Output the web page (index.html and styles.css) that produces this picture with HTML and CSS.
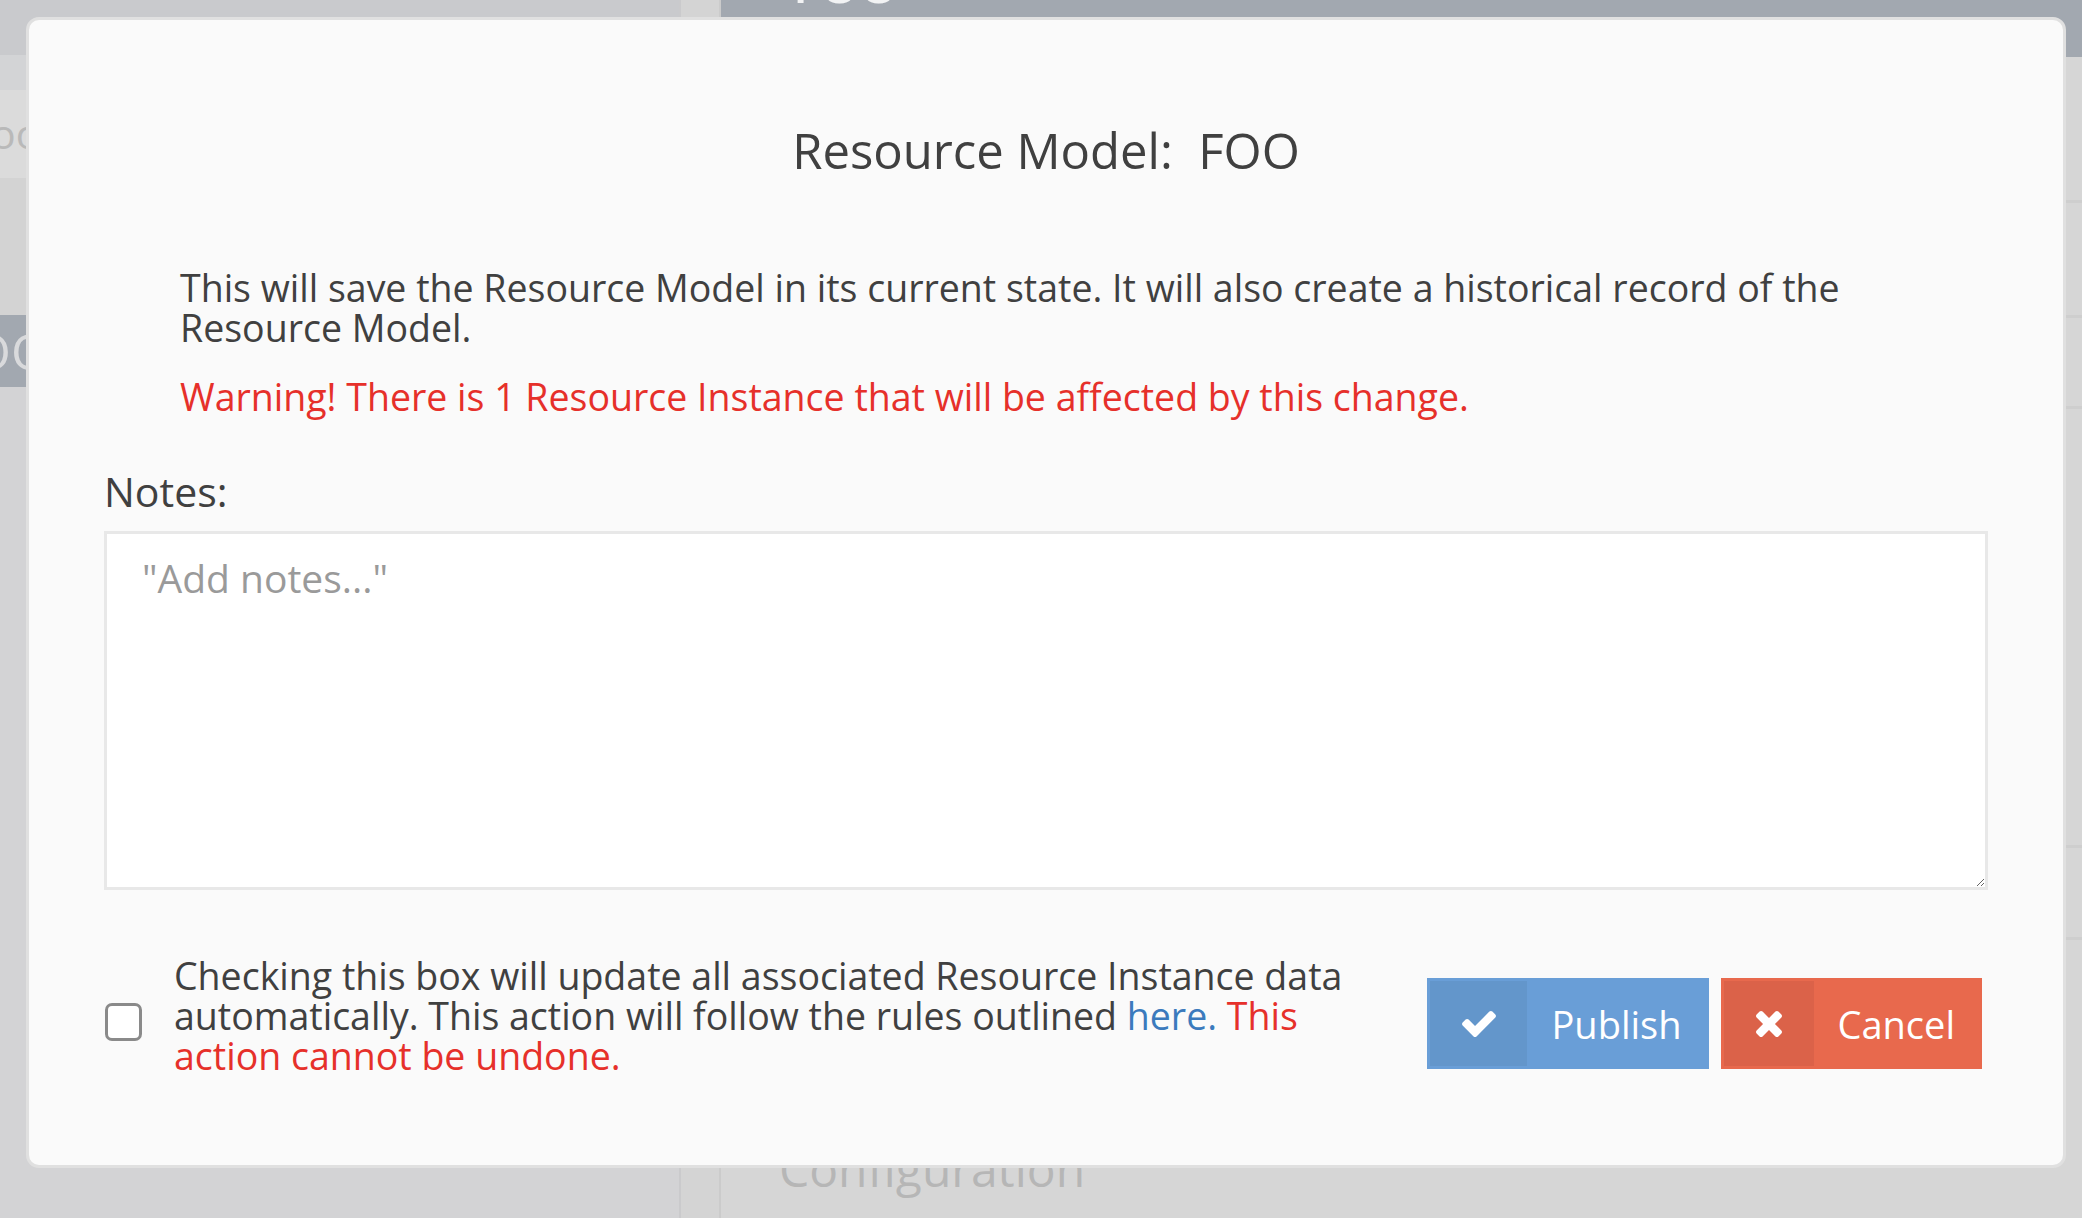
FILE: index.html
```html
<!DOCTYPE html>
<html lang="en">
<head>
<meta charset="utf-8">
<title>Resource Model: FOO</title>
<link rel="stylesheet" href="styles.css">
</head>
<body>
<div class="page">
  <div class="col-left">
    <div class="l-top"></div>
    <div class="l-row1"></div>
    <div class="l-row2"><span class="l-txt1">oo</span></div>
    <div class="l-row3"></div>
    <div class="l-row4"><span class="l-txt2">OO</span></div>
    <div class="l-rest"></div>
  </div>
  <div class="col-div"></div>
  <div class="col-right">
    <div class="r-head"><div class="r-title">FOO</div></div>
    <div class="r-row r-h1"></div>
    <div class="r-row r-h2"></div>
    <div class="r-row r-h3"></div>
    <div class="r-row r-h4"></div>
    <div class="r-row r-h5"></div>
    <div class="r-fill"></div>
    <div class="r-config">Configuration</div>
  </div>
</div>

<div class="modal">
  <h3 class="m-title">Resource Model:&nbsp; FOO</h3>
  <div class="m-body">
    <p class="m-text">This will save the Resource Model in its current state. It will also create a historical record of the Resource Model.</p>
    <p class="m-warn">Warning! There is 1 Resource Instance that will be affected by this change.</p>
  </div>
  <label class="m-label" for="notes">Notes:</label>
  <textarea id="notes" class="m-notes" placeholder="&quot;Add notes...&quot;"></textarea>
  <div class="m-foot">
    <input type="checkbox" class="m-cb" aria-label="update instances">
    <div class="m-cbtext">Checking this box will update all associated Resource Instance data automatically. This action will follow the rules outlined <a class="m-link" href="#">here.</a> <span class="m-red">This action cannot be undone.</span></div>
    <div class="m-btns">
      <button class="btn btn-pub" type="button">
        <span class="btn-ico ico-pub">
          <svg class="i-check" viewBox="121 334 1550 1188" aria-hidden="true"><path fill="#fff" d="M1671 566q0 40-28 68l-724 724-136 136q-28 28-68 28t-68-28l-136-136-362-362q-28-28-28-68t28-68l136-136q28-28 68-28t68 28l294 295 656-657q28-28 68-28t68 28l136 136q28 28 28 68z"/></svg>
        </span>
        <span class="btn-label">Publish</span>
      </button>
      <button class="btn btn-can" type="button">
        <span class="btn-ico ico-can">
          <svg class="i-times" viewBox="110 366 1188 1188" aria-hidden="true"><path fill="#fff" d="M1298 1322q0 40-28 68l-136 136q-28 28-68 28t-68-28l-294-294-294 294q-28 28-68 28t-68-28l-136-136q-28-28-28-68t28-68l294-294-294-294q-28-28-28-68t28-68l136-136q28-28 68-28t68 28l294 294 294-294q28-28 68-28t68 28l136 136q28 28 28 68t-28 68l-294 294 294 294q28 28 28 68z"/></svg>
        </span>
        <span class="btn-label">Cancel</span>
      </button>
    </div>
  </div>
</div>
</body>
</html>
```

FILE: styles.css
```css
* { box-sizing: border-box; }
html, body { margin: 0; padding: 0; }
body {
  width: 2082px;
  height: 1218px;
  overflow: hidden;
  background: #d4d4d4;
  font-family: "Open Sans", "DejaVu Sans", sans-serif;
  position: relative;
}

/* background page (dimmed) */
.page {
  display: flex;
  height: 1218px;
  overflow: hidden;
}
.col-left {
  width: 681px;
  display: flex;
  flex-direction: column;
  border-right: 2px solid #cacacc;
  background: #d2d2d4;
}
.l-top { height: 55px; background: #c9cacd; }
.l-row1 { height: 35px; background: #d3d4d6; }
.l-row2 {
  height: 88px;
  background: #dbdbdb;
  font-size: 41px;
  line-height: 86px;
  color: #b9b9b9;
  overflow: hidden;
  white-space: nowrap;
}
.l-txt1 { display: block; text-indent: -9px; }
.l-row3 { height: 137px; background: #d3d3d3; }
.l-row4 {
  height: 72px;
  background: #a2a8b0;
  font-size: 50px;
  line-height: 72px;
  color: #d9dadc;
  overflow: hidden;
  white-space: nowrap;
}
.l-txt2 { display: block; text-indent: -28px; }
.l-rest { flex: 1; background: #d3d3d5; }

.col-div {
  width: 40px;
  background: #d4d4d4;
  border-right: 2px solid #cbcbcb;
}

.col-right {
  flex: 1;
  display: flex;
  flex-direction: column;
  background: #d6d6d6;
}
.r-head {
  height: 57px;
  background: #a2a8b0;
  overflow: hidden;
}
.r-title {
  font-size: 50px;
  line-height: 50px;
  font-weight: 600;
  color: #f2f3f4;
  padding-left: 72px;
  margin-top: -41px;
}
.r-row { border-bottom: 3px solid #cecece; }
.r-h1 { height: 146px; }
.r-h2 { height: 115px; }
.r-h3 { height: 91px; }
.r-h4 { height: 439px; }
.r-h5 { height: 92px; }
.r-fill { flex: 1; }
.r-config {
  font-size: 48px;
  line-height: 56px;
  color: #b6b6b6;
  padding-left: 58px;
  margin-bottom: 21px;
}

/* modal overlay */
.modal {
  position: absolute;
  left: 26px;
  top: 17px;
  width: 2040px;
  height: 1151px;
  border: 3px solid #e0e0e0;
  border-radius: 13px;
  background: #fafafa;
  padding: 102px 75px 0;
  color: #404040;
}
.m-title {
  margin: 0;
  font-size: 49px;
  line-height: 56px;
  font-weight: 400;
  text-align: center;
  color: #404040;
}
.m-body {
  padding-left: 76px;
  margin-top: 90px;
}
.m-text {
  margin: 0;
  font-size: 37.5px;
  line-height: 40px;
  color: #404040;
}
.m-warn {
  margin: 29px 0 0;
  font-size: 37.5px;
  line-height: 40px;
  color: #e6302a;
}
.m-label {
  display: block;
  margin-top: 50px;
  font-size: 41px;
  line-height: 48px;
  color: #404040;
}
.m-notes {
  display: block;
  width: 100%;
  height: 359px;
  margin-top: 16px;
  border: 3px solid #e8e8e8;
  border-radius: 0;
  background: #fff;
  padding: 24px 35px;
  font-family: "Open Sans", "DejaVu Sans", sans-serif;
  font-size: 39px;
  line-height: 40px;
  color: #404040;
  resize: vertical;
  outline: none;
}
.m-notes::placeholder { color: #9a9a9a; }

.m-foot {
  display: flex;
  align-items: flex-start;
  margin-top: 66px;
}
.m-cb {
  appearance: none;
  -webkit-appearance: none;
  flex: 0 0 auto;
  width: 37px;
  height: 38px;
  margin: 47px 0 0 1px;
  border: 3px solid #8a8a8a;
  border-radius: 7px;
  background: #fff;
}
.m-cbtext {
  width: 1206px;
  margin-left: 32px;
  font-size: 37.5px;
  line-height: 40px;
  color: #404040;
}
.m-link { color: #3b7abd; text-decoration: none; }
.m-red { color: #e6302a; }

.m-btns {
  display: flex;
  gap: 12px;
  margin: 22px 6px 0 auto;
}
.btn {
  display: flex;
  align-items: stretch;
  height: 91px;
  padding: 3px;
  border: none;
  border-radius: 0;
  font-family: "Open Sans", "DejaVu Sans", sans-serif;
  font-size: 38px;
  color: #fff;
  cursor: pointer;
}
.btn-pub { background: #699ed7; }
.btn-can { background: #e8694d; }
.btn-ico {
  display: flex;
  align-items: center;
  justify-content: center;
}
.ico-pub { width: 97px; background: #6396cb; }
.ico-can { width: 90px; background: #db6249; }
.i-check { width: 34px; height: 26px; display: block; }
.i-times { width: 26px; height: 26px; display: block; }
.btn-label {
  display: flex;
  align-items: center;
  padding: 0 24px;
}
```
